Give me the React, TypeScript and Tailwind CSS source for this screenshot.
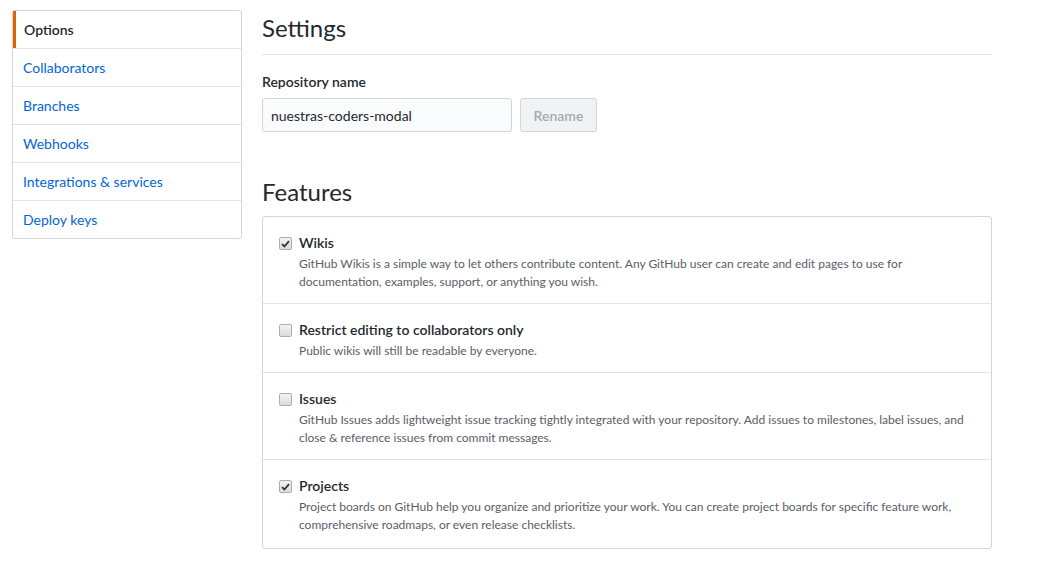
import React from "react";

const navItems = [
  "Options",
  "Collaborators",
  "Branches",
  "Webhooks",
  "Integrations & services",
  "Deploy keys",
];

const features = [
  {
    title: "Wikis",
    checked: true,
    desc: "GitHub Wikis is a simple way to let others contribute content. Any GitHub user can create and edit pages to use for documentation, examples, support, or anything you wish.",
  },
  {
    title: "Restrict editing to collaborators only",
    checked: false,
    desc: "Public wikis will still be readable by everyone.",
  },
  {
    title: "Issues",
    checked: false,
    desc: "GitHub Issues adds lightweight issue tracking tightly integrated with your repository. Add issues to milestones, label issues, and close & reference issues from commit messages.",
  },
  {
    title: "Projects",
    checked: true,
    desc: "Project boards on GitHub help you organize and prioritize your work. You can create project boards for specific feature work, comprehensive roadmaps, or even release checklists.",
  },
];

const Checkbox = ({ checked }: { checked: boolean }) => (
  <span className="mt-[4px] flex h-[13px] w-[13px] shrink-0 items-center justify-center rounded-[2px] border border-[#adadad] bg-gradient-to-b from-[#f3f3f3] to-[#dcdcdc]">
    {checked && (
      <svg width="9" height="8" viewBox="0 0 9 8">
        <path d="M1 4.2 L3.4 6.5 L8 1.2" fill="none" stroke="#333" strokeWidth="1.8" />
      </svg>
    )}
  </span>
);

const App = () => {
  return (
    <div className="min-h-screen w-full bg-white font-['Lato','Liberation_Sans',sans-serif] text-[14px] text-[#24292e]">
      <div className="flex gap-5 pl-3 pt-[10px]">
        {/* Sidebar */}
        <nav className="h-fit w-[230px] shrink-0 rounded-[3px] border border-[#d1d5da]">
          {navItems.map((item, i) => (
            <div
              key={item}
              className={
                i === 0
                  ? "flex h-[37px] items-center border-l-[3px] border-[#e36209] pl-[8px] font-semibold text-[#24292e]"
                  : "flex h-[38px] items-center border-t border-[#e1e4e8] pl-[10px] text-[#0366d6]"
              }
            >
              {item}
            </div>
          ))}
        </nav>

        {/* Main */}
        <main className="w-[730px]">
          <h2 className="border-b border-[#e1e4e8] pb-[8px] text-[24px] font-normal leading-[36px] text-[#24292e]">
            Settings
          </h2>
          <label className="mt-[17px] block font-semibold leading-[20px]">Repository name</label>
          <div className="mt-[6px] flex gap-2">
            <input
              readOnly
              value="nuestras-coders-modal"
              className="h-[34px] w-[250px] rounded-[3px] border border-[#d1d5da] bg-[#fafbfc] px-2 text-[14px] text-[#24292e] outline-none"
            />
            <button className="h-[34px] w-[77px] rounded-[3px] border border-[#d1d5da] bg-[#eff3f6] text-[14px] font-semibold text-[#a3aab1]">
              Rename
            </button>
          </div>

          <h2 className="mt-[42px] text-[24px] font-normal leading-[36px] text-[#24292e]">Features</h2>
          <div className="mt-[6px] rounded-[3px] border border-[#d1d5da]">
            {features.map((f, i) => (
              <div
                key={f.title}
                className={`flex gap-[7px] pl-4 pr-4 pt-4 ${i > 0 ? "border-t border-[#e1e4e8]" : ""} ${
                  i === features.length - 1 ? "pb-[14px]" : "pb-[12px]"
                }`}
              >
                <Checkbox checked={f.checked} />
                <div>
                  <div className="font-semibold leading-[20px]">{f.title}</div>
                  <p className="mt-[2px] text-[12px] leading-[18px] text-[#586069]">{f.desc}</p>
                </div>
              </div>
            ))}
          </div>
        </main>
      </div>
    </div>
  );
};

export default App;
